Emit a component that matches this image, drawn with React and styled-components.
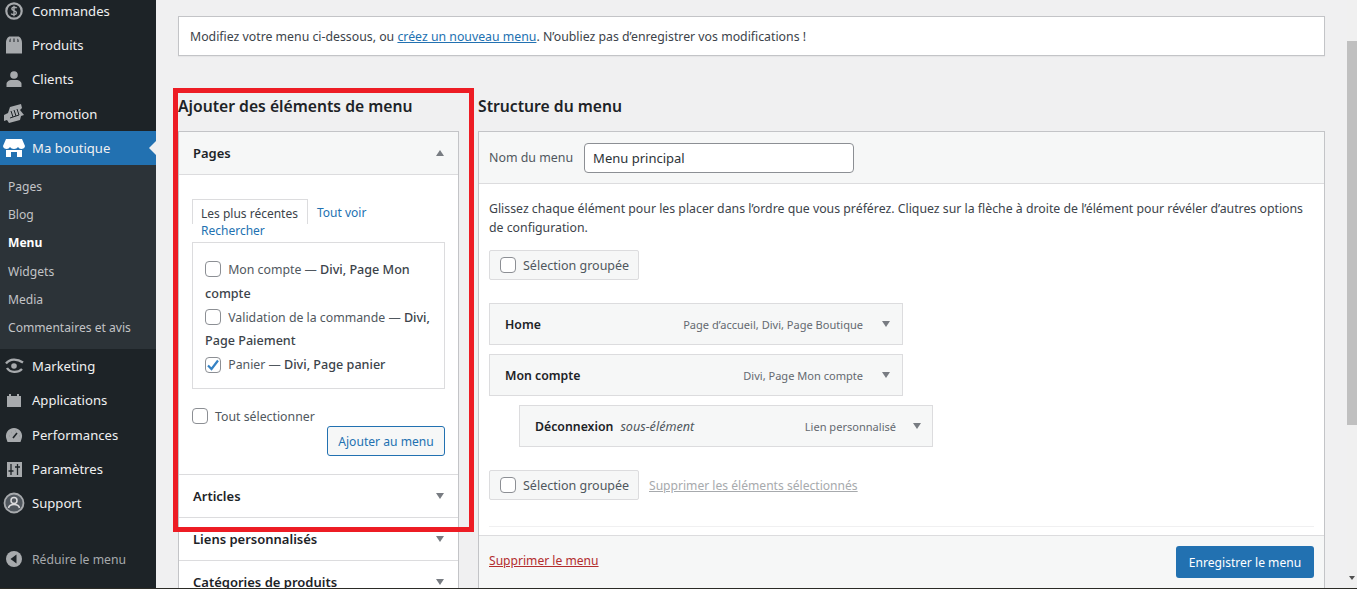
import React from "react";
import styled, { createGlobalStyle } from "styled-components";

const GlobalStyle = createGlobalStyle`
  html, body {
    margin: 0;
    padding: 0;
    height: 100%;
    overflow: hidden;
    background: #f0f0f1;
  }
  * { box-sizing: border-box; }
  body {
    font-family: "Noto Sans", "Open Sans", sans-serif;
    font-size: 12.3px;
    color: #3c434a;
  }
`;

const Shell = styled.div`
  display: flex;
  height: 589px;
  overflow: hidden;
  position: relative;
  border-bottom: 1px solid #2b2b26;
`;

/* sidebar */
const Sidebar = styled.nav`
  width: 156px;
  flex: none;
  background: #1d2327;
  display: flex;
  flex-direction: column;
  overflow: hidden;
`;

const MenuList = styled.div`
  margin-top: -6px;
  display: flex;
  flex-direction: column;
`;

const MenuRow = styled.div`
  height: 34.2px;
  display: flex;
  align-items: center;
  color: ${(p) => (p.$muted ? "#a7aaad" : "#f0f0f1")};
  background: ${(p) => (p.$active ? "#2271b1" : "transparent")};
  font-size: 13.1px;
  position: relative;
  &::after {
    content: "";
    display: ${(p) => (p.$active ? "block" : "none")};
    position: absolute;
    right: 0;
    top: 10px;
    border: 7px solid transparent;
    border-right-color: #f0f0f1;
    border-left-width: 0;
  }
`;

const IconSlot = styled.span`
  width: 32px;
  flex: none;
  display: flex;
  align-items: center;
  justify-content: center;
  padding-right: 4px;
  color: ${(p) => (p.$active ? "#fff" : "#a7aaad")};
`;

const SubMenu = styled.div`
  background: #2c3338;
  padding: 7.5px 0;
  display: flex;
  flex-direction: column;
`;

const SubItem = styled.div`
  height: 28.2px;
  padding-left: 8px;
  display: flex;
  align-items: center;
  font-size: 12.1px;
  color: ${(p) => (p.$current ? "#fff" : "#c3c4c7")};
  font-weight: ${(p) => (p.$current ? 700 : 400)};
`;

const Collapse = styled(MenuRow)`
  margin-top: 22px;
  font-size: 12.2px;
`;

/* main */
const Main = styled.main`
  flex: 1;
  min-width: 0;
  padding: 16px 22px 0;
  overflow: hidden;
`;

const Notice = styled.div`
  height: 40px;
  background: #fff;
  border: 1px solid #c3c4c7;
  box-shadow: 0 1px 1px rgba(0, 0, 0, 0.04);
  padding-left: 11px;
  line-height: 40px;
  color: #3c434a;
`;

const Link = styled.a`
  color: #2271b1;
  text-decoration: underline;
`;

const Columns = styled.div`
  display: grid;
  grid-template-columns: 281px 1fr;
  column-gap: 19px;
  margin-top: 38px;
`;

const Heading = styled.h2`
  margin: 0 0 12px;
  height: 25px;
  line-height: 25px;
  font-size: 15.7px;
  font-weight: 600;
  color: #1d2327;
`;

/* left column */
const Accordion = styled.div`
  background: #fff;
  border: 1px solid #c3c4c7;
`;

const AccordionHead = styled.div`
  height: 43px;
  padding: 0 14px;
  display: flex;
  align-items: center;
  justify-content: space-between;
  font-size: 13px;
  font-weight: 600;
  color: #1d2327;
  background: ${(p) => (p.$open ? "#f6f7f7" : "#fff")};
  border-bottom: 1px solid #dcdcde;
`;

const Caret = styled.span`
  width: 0;
  height: 0;
  border-left: 4px solid transparent;
  border-right: 4px solid transparent;
  ${(p) => (p.$up ? "border-bottom: 6px solid #787c82;" : "border-top: 6px solid #787c82;")}
`;

const AccordionBody = styled.div`
  padding: 24px 13px 18px;
  border-bottom: 1px solid #dcdcde;
`;

const Tabs = styled.div`
  display: flex;
  flex-wrap: wrap;
  line-height: 19px;
  font-size: 12px;
`;

const Tab = styled.span`
  color: ${(p) => (p.$active ? "#3c434a" : "#2271b1")};
  padding: ${(p) => (p.$active ? "4px 9px 0 8px" : "4px 9px 0")};
  height: ${(p) => (p.$active ? "25px" : "auto")};
  ${(p) => p.$active && "border: 1px solid #dcdcde; border-bottom: 0;"}
`;

const SearchTab = styled(Tab)`
  width: 100%;
  padding: 0 9px;
  height: 16px;
  line-height: 13px;
`;

const Box = styled.span`
  display: inline-flex;
  align-items: center;
  justify-content: center;
  width: 16px;
  height: 16px;
  border: 1px solid #8c8f94;
  border-radius: 4px;
  background: #fff;
  margin-right: 7px;
  vertical-align: -3px;
  flex: none;
`;

const ChecklistBox = styled.div`
  border: 1px solid #dcdcde;
  margin-top: 2px;
  height: 147px;
  padding: 15px 12px 0;
  font-size: 12.3px;
`;

const CheckItem = styled.div`
  line-height: 23.8px;
  color: #50575e;
  ${Box} {
    margin-right: 4px;
  }
`;

const Strong = styled.span`
  font-weight: 500;
  font-size: 12.6px;
  color: #3c434a;
`;

const SelectAll = styled.div`
  margin-top: 18px;
  display: flex;
  align-items: center;
  height: 18px;
  font-size: 12.3px;
  color: #50575e;
`;

const ActionRow = styled.div`
  display: flex;
  justify-content: flex-end;
  margin-top: 1px;
`;

const OutlineButton = styled.button`
  font: inherit;
  font-size: 12.1px;
  height: 30px;
  width: 118px;
  padding: 0;
  color: #2271b1;
  background: #f6f7f7;
  border: 1px solid #2271b1;
  border-radius: 3px;
`;

/* right column */
const Panel = styled.div`
  background: #fff;
  border: 1px solid #c3c4c7;
  height: 461px;
  display: flex;
  flex-direction: column;
`;

const PanelHead = styled.div`
  height: 52px;
  flex: none;
  background: #f6f7f7;
  border-bottom: 1px solid #dcdcde;
  display: flex;
  align-items: center;
  padding-left: 10px;
  gap: 11px;
  font-size: 12.4px;
  color: #50575e;
`;

const NameInput = styled.div`
  width: 270px;
  height: 30px;
  background: #fff;
  border: 1px solid #8c8f94;
  border-radius: 4px;
  display: flex;
  align-items: center;
  padding-left: 8px;
  font-size: 13px;
  color: #2c3338;
`;

const PanelBody = styled.div`
  flex: 1;
  padding: 15px 10px 0;
  display: flex;
  flex-direction: column;
`;

const Help = styled.p`
  margin: 0 0 13px;
  font-size: 12.3px;
  line-height: 19px;
  color: #3c434a;
`;

const BulkBox = styled.div`
  width: 150px;
  height: 30px;
  display: flex;
  align-items: center;
  padding-left: 10px;
  background: #f6f7f7;
  border: 1px solid #dcdcde;
  border-radius: 2px;
  font-size: 12.5px;
  color: #50575e;
`;

const ItemList = styled.div`
  margin: 23px 0;
  display: flex;
  flex-direction: column;
  gap: 9px;
`;

const MenuItemBar = styled.div`
  width: 414px;
  height: 42px;
  margin-left: ${(p) => (p.$depth ? "30px" : "0")};
  background: #f6f7f7;
  border: 1px solid #dcdcde;
  display: flex;
  align-items: center;
  padding: 0 ${(p) => (p.$depth ? "11px" : "12px")} 0 15px;
  font-size: 12.3px;
`;

const ItemTitle = styled.span`
  font-weight: 600;
  color: #1d2327;
`;

const ItemSub = styled.em`
  margin-left: 7px;
  font-size: 12.6px;
  color: #50575e;
`;

const ItemType = styled.span`
  margin-left: auto;
  margin-right: ${(p) => (p.$tight ? "17px" : "19px")};
  font-size: 11.05px;
  color: #646970;
`;

const BulkRow = styled.div`
  display: flex;
  align-items: center;
  gap: 10px;
`;

const MutedLink = styled.a`
  color: #a7aaad;
  text-decoration: underline;
  font-size: 12.1px;
`;

const Rule = styled.div`
  border-top: 1px solid #f0f0f1;
  margin-top: 26px;
`;

const PanelFoot = styled.div`
  height: 56px;
  flex: none;
  background: #f6f7f7;
  border-top: 1px solid #dcdcde;
  display: flex;
  align-items: flex-start;
  justify-content: space-between;
  padding: 10px;
`;

const DangerLink = styled.a`
  color: #b32d2e;
  text-decoration: underline;
  font-size: 12.1px;
  line-height: 29px;
`;

const PrimaryButton = styled.button`
  font: inherit;
  font-size: 12.1px;
  width: 138px;
  height: 32px;
  padding: 0;
  color: #fff;
  background: #2271b1;
  border: 0;
  border-radius: 3px;
`;

/* browser scrollbar */
const Scrollbar = styled.div`
  width: 10px;
  flex: none;
  background: #f0f0f0;
  display: flex;
  flex-direction: column;
  align-items: center;
  padding-top: 41px;
  position: relative;
`;

const Thumb = styled.div`
  width: 100%;
  height: 384px;
  background: #c0c0c0;
`;

const ScrollArrow = styled.span`
  position: absolute;
  bottom: 8px;
  border-left: 3.5px solid transparent;
  border-right: 3.5px solid transparent;
  border-top: 4px solid #505050;
`;

/* red annotation on top of the screenshot */
const Highlight = styled.div`
  position: absolute;
  left: 173px;
  top: 88px;
  width: 301px;
  height: 444px;
  border: 5px solid #ed1c24;
  pointer-events: none;
`;

const Check = () => (
  <svg width="14" height="14" viewBox="0 0 14 14">
    <path d="M2 7.5 5.500 11 12 2.500" fill="none" stroke="#3582c4" strokeWidth="2.200" />
  </svg>
);

const icons = {
  dollar: (
    <svg width="20" height="20" viewBox="0 0 20 20">
      <circle cx="10" cy="10" r="7.700" fill="none" stroke="currentColor" strokeWidth="2.200" />
      <path d="M12.700 7.200C12 6 8 5.600 7.800 7.800c-.2 2.400 4.800 1.400 4.600 4.200-.2 2.200-4.400 1.900-5.200.6M10 4.800v10.400" fill="none" stroke="currentColor" strokeWidth="1.400" />
    </svg>
  ),
  bag: (
    <svg width="20" height="20" viewBox="0 0 20 20">
      <path fill="currentColor" d="M2 18.500V8c0-4 2-6.500 4-6.500h8C16 1.500 18 4 18 8v10.500zM5.500 7h1V5c0-1 .5-1.500 1-1.500H7c-1 0-1.500 1-1.500 2zm4 0h1V3.500h-1zm4 0h1V5.500c0-1-.5-2-1.500-2h-.2c.5 0 .7.500.700 1.500z" />
    </svg>
  ),
  user: (
    <svg width="20" height="20" viewBox="0 0 20 20">
      <circle cx="10" cy="6" r="3.800" fill="currentColor" />
      <path fill="currentColor" d="M2.500 18v-3c0-2.500 3-4 5-4h5c2 0 5 1.500 5 4v3z" />
    </svg>
  ),
  promo: (
    <svg width="22" height="20" viewBox="0 0 22 20">
      <path fill="currentColor" d="M1 11l4-2 2-6 11-3 1 4-2 2 4 5-3 1-1 4-11 3-2-3-3 1z" />
      <path fill="none" stroke="#1d2327" strokeWidth="1" d="M8 7l2 6M11 6l2 6M14 5l2 6M7 14l9-3" />
    </svg>
  ),
  store: (
    <svg width="24" height="20" viewBox="0 0 24 20">
      <path fill="currentColor" d="M4 1h16l3 7c0 2-2 3-3.700 3S17 10 16 9c-.8 1-2.300 2-4 2s-3.200-1-4-2c-1 1-1.600 2-3.300 2S1 10 1 8z" />
      <path fill="currentColor" d="M4 12h16v7h-5v-5h-6v5H4z" />
    </svg>
  ),
  marketing: (
    <svg width="22" height="20" viewBox="0 0 22 20">
      <circle cx="11" cy="10" r="2.800" fill="currentColor" />
      <path fill="none" stroke="currentColor" strokeWidth="2.400" d="M3 7.500c4-5 11-5 17-1M4 12c3 5 11 5 15 1" />
    </svg>
  ),
  apps: (
    <svg width="20" height="20" viewBox="0 0 20 20">
      <path fill="currentColor" d="M3 6h2V4h2v2h6V4h2v2h2v11H3z" />
    </svg>
  ),
  gauge: (
    <svg width="20" height="20" viewBox="0 0 20 20">
      <path fill="currentColor" d="M10 3a8 8 0 0 1 7.500 11l-1 3h-13l-1-3A8 8 0 0 1 10 3z" />
      <path fill="none" stroke="#1d2327" strokeWidth="1.600" d="M9 13l4-5M5 11h.1M7 7.500h.1M11 6h.1M15 11h.1" />
    </svg>
  ),
  sliders: (
    <svg width="20" height="20" viewBox="0 0 20 20">
      <path fill="currentColor" d="M3 3h15v15H3z" />
      <path fill="none" stroke="#1d2327" strokeWidth="1.300" d="M7 5v11M4.500 12h5M13.500 5v11M11 8h5" />
    </svg>
  ),
  support: (
    <svg width="22" height="22" viewBox="0 0 22 22">
      <circle cx="11" cy="11" r="9.500" fill="#50575e" stroke="currentColor" strokeWidth="1.800" />
      <circle cx="11" cy="8.500" r="3" fill="none" stroke="#dcdcde" strokeWidth="1.500" />
      <path fill="none" stroke="#dcdcde" strokeWidth="1.500" d="M5.500 16c.5-2.500 3-3.500 5.500-3.500s5 1 5.500 3.500" />
    </svg>
  ),
  collapse: (
    <svg width="18" height="18" viewBox="0 0 18 18">
      <circle cx="9" cy="9" r="8" fill="currentColor" />
      <path fill="#1d2327" d="M11.500 4.500v9L5.500 9z" />
    </svg>
  ),
};

const topItems = [
  ["dollar", "Commandes"],
  ["bag", "Produits"],
  ["user", "Clients"],
  ["promo", "Promotion"],
];

const subItems = ["Pages", "Blog", "Menu", "Widgets", "Media", "Commentaires et avis"];

const bottomItems = [
  ["marketing", "Marketing"],
  ["apps", "Applications"],
  ["gauge", "Performances"],
  ["sliders", "Paramètres"],
  ["support", "Support"],
];

const App = () => (
  <>
    <GlobalStyle />
    <Shell>
      <Sidebar>
        <MenuList>
          {topItems.map(([icon, label]) => (
            <MenuRow key={label}>
              <IconSlot>{icons[icon]}</IconSlot>
              {label}
            </MenuRow>
          ))}
          <MenuRow $active>
            <IconSlot $active>{icons.store}</IconSlot>
            Ma boutique
          </MenuRow>
          <SubMenu>
            {subItems.map((s) => (
              <SubItem key={s} $current={s === "Menu"}>
                {s}
              </SubItem>
            ))}
          </SubMenu>
          {bottomItems.map(([icon, label]) => (
            <MenuRow key={label}>
              <IconSlot>{icons[icon]}</IconSlot>
              {label}
            </MenuRow>
          ))}
          <Collapse $muted>
            <IconSlot>{icons.collapse}</IconSlot>
            Réduire le menu
          </Collapse>
        </MenuList>
      </Sidebar>

      <Main>
        <Notice>
          Modifiez votre menu ci-dessous, ou <Link>créez un nouveau menu</Link>. N’oubliez pas d’enregistrer vos modifications !
        </Notice>
        <Columns>
          <section>
            <Heading>Ajouter des éléments de menu</Heading>
            <Accordion>
              <AccordionHead $open>
                Pages <Caret $up />
              </AccordionHead>
              <AccordionBody>
                <Tabs>
                  <Tab $active>Les plus récentes</Tab>
                  <Tab>Tout voir</Tab>
                  <SearchTab>Rechercher</SearchTab>
                </Tabs>
                <ChecklistBox>
                  <CheckItem>
                    <Box /> Mon compte — <Strong>Divi, Page Mon compte</Strong>
                  </CheckItem>
                  <CheckItem>
                    <Box /> Validation de la commande — <Strong>Divi, Page Paiement</Strong>
                  </CheckItem>
                  <CheckItem>
                    <Box><Check /></Box> Panier — <Strong>Divi, Page panier</Strong>
                  </CheckItem>
                </ChecklistBox>
                <SelectAll>
                  <Box /> Tout sélectionner
                </SelectAll>
                <ActionRow>
                  <OutlineButton>Ajouter au menu</OutlineButton>
                </ActionRow>
              </AccordionBody>
              <AccordionHead>
                Articles <Caret />
              </AccordionHead>
              <AccordionHead>
                Liens personnalisés <Caret />
              </AccordionHead>
              <AccordionHead>
                Catégories de produits <Caret />
              </AccordionHead>
            </Accordion>
          </section>

          <section>
            <Heading>Structure du menu</Heading>
            <Panel>
              <PanelHead>
                Nom du menu
                <NameInput>Menu principal</NameInput>
              </PanelHead>
              <PanelBody>
                <Help>
                  Glissez chaque élément pour les placer dans l’ordre que vous préférez. Cliquez sur la flèche à droite de l’élément pour révéler d’autres options de configuration.
                </Help>
                <BulkBox>
                  <Box /> Sélection groupée
                </BulkBox>
                <ItemList>
                  <MenuItemBar>
                    <ItemTitle>Home</ItemTitle>
                    <ItemType>Page d’accueil, Divi, Page Boutique</ItemType>
                    <Caret />
                  </MenuItemBar>
                  <MenuItemBar>
                    <ItemTitle>Mon compte</ItemTitle>
                    <ItemType>Divi, Page Mon compte</ItemType>
                    <Caret />
                  </MenuItemBar>
                  <MenuItemBar $depth>
                    <ItemTitle>Déconnexion</ItemTitle>
                    <ItemSub>sous-élément</ItemSub>
                    <ItemType $tight>Lien personnalisé</ItemType>
                    <Caret />
                  </MenuItemBar>
                </ItemList>
                <BulkRow>
                  <BulkBox>
                    <Box /> Sélection groupée
                  </BulkBox>
                  <MutedLink>Supprimer les éléments sélectionnés</MutedLink>
                </BulkRow>
                <Rule />
              </PanelBody>
              <PanelFoot>
                <DangerLink>Supprimer le menu</DangerLink>
                <PrimaryButton>Enregistrer le menu</PrimaryButton>
              </PanelFoot>
            </Panel>
          </section>
        </Columns>
      </Main>

      <Scrollbar>
        <Thumb />
        <ScrollArrow />
      </Scrollbar>
      <Highlight />
    </Shell>
  </>
);

export default App;
